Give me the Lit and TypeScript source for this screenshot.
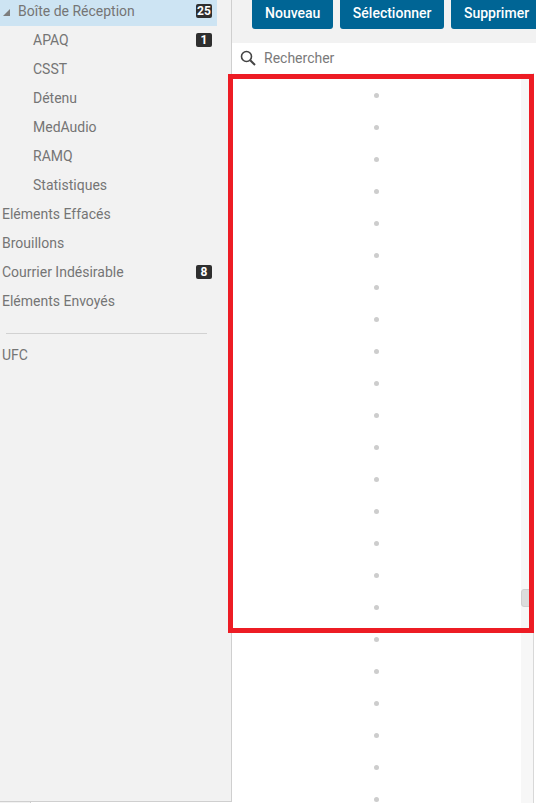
import { LitElement, html, css } from "lit";
import { customElement } from "lit/decorators.js";

const subs = [
  { t: "APAQ", b: "1" },
  { t: "CSST" },
  { t: "Détenu" },
  { t: "MedAudio" },
  { t: "RAMQ" },
  { t: "Statistiques" },
];
const tops = [
  { t: "Eléments Effacés" },
  { t: "Brouillons" },
  { t: "Courrier Indésirable", b: "8" },
  { t: "Eléments Envoyés" },
];
const dots = Array.from({ length: 23 });

@customElement("app-root")
export class AppRoot extends LitElement {
  static styles = css`
    :host {
      display: block;
      width: 536px;
      height: 803px;
      overflow: hidden;
      position: relative;
      background: #fff;
      font-family: Roboto, "Liberation Sans", sans-serif;
      font-size: 14px;
      color: #757575;
    }
    .page {
      display: flex;
      height: 803px;
    }
    .side {
      box-sizing: border-box;
      width: 232px;
      height: 802px;
      flex: none;
      background: #f2f2f2;
      border-right: 1px solid #cfcfcf;
      border-bottom: 1px solid #cfcfcf;
      padding-right: 14px;
    }
    .sel {
      display: flex;
      align-items: center;
      box-sizing: border-box;
      height: 26px;
      background: #cde4f3;
      padding: 0 5px 4px 3px;
    }
    .tri {
      width: 0;
      height: 0;
      border-left: 7px solid transparent;
      border-bottom: 7px solid #7d7d7d;
      margin-right: 8px;
      margin-top: 2px;
    }
    .row {
      display: flex;
      align-items: center;
      height: 29px;
      padding: 0 5px 0 2px;
    }
    .row.sub {
      padding-left: 33px;
    }
    .rows {
      margin-top: -1px;
    }
    .grow {
      flex: 1;
    }
    .badge {
      background: #2f2f2f;
      color: #fff;
      border-radius: 2px;
      font-size: 12px;
      font-weight: 700;
      line-height: 14px;
      height: 14px;
      width: 16px;
      text-align: center;
    }
    .rule {
      height: 1px;
      background: #d2d2d2;
      margin: 18px 10px 6px 6px;
    }
    .main {
      flex: 1;
      min-width: 0;
      display: flex;
      flex-direction: column;
    }
    .bar {
      display: flex;
      gap: 6.5px;
      height: 43px;
      flex: none;
      box-sizing: border-box;
      padding-left: 20px;
      background: #f2f2f2;
    }
    .btn {
      height: 29px;
      box-sizing: border-box;
      background: #006595;
      color: #fff;
      font-weight: 500;
      border-radius: 0 0 3px 3px;
      padding: 0 13px;
      line-height: 26px;
      white-space: nowrap;
      flex: none;
    }
    .search {
      display: flex;
      align-items: center;
      gap: 8px;
      height: 30px;
      flex: none;
      padding-left: 8px;
      color: #7a7a7a;
    }
    .list {
      flex: 1;
      display: flex;
      min-height: 0;
    }
    .items {
      flex: 1;
      display: flex;
      flex-direction: column;
      align-items: center;
      gap: 27px;
      padding-top: 20px;
      overflow: hidden;
    }
    .dot {
      width: 5px;
      height: 5px;
      flex: none;
      border-radius: 50%;
      background: #cdcdcd;
    }
    .track {
      position: relative;
      width: 12px;
      flex: none;
      background: #f7f7f7;
      border-right: 1px solid #d8d8d8;
      margin-right: 2px;
    }
    .thumb {
      position: absolute;
      left: 0;
      top: 516px;
      width: 10px;
      height: 18px;
      border-radius: 3px 0 0 3px;
      background: #dcdcdc;
      border: 1px solid #cfcfcf;
      box-sizing: border-box;
    }
    .mark {
      position: absolute;
      left: 228px;
      top: 74px;
      width: 306px;
      height: 559px;
      box-sizing: border-box;
      border: 5px solid #ed1c24;
      pointer-events: none;
    }
    .foot {
      position: absolute;
      left: 0;
      bottom: 0;
      width: 30px;
      height: 1px;
      border-right: 1px solid #cfcfcf;
      background: #f2f2f2;
    }
  `;

  render() {
    return html`
      <div class="page">
        <nav class="side">
          <div class="sel">
            <span class="tri"></span>
            <span class="grow">Boîte de Réception</span>
            <span class="badge">25</span>
          </div>
          <div class="rows">
            ${subs.map(
              (s) => html`<div class="row sub">
                <span class="grow">${s.t}</span>
                ${s.b ? html`<span class="badge">${s.b}</span>` : ""}
              </div>`
            )}
            ${tops.map(
              (s) => html`<div class="row">
                <span class="grow">${s.t}</span>
                ${s.b ? html`<span class="badge">${s.b}</span>` : ""}
              </div>`
            )}
          </div>
          <div class="rule"></div>
          <div class="row">UFC</div>
        </nav>
        <main class="main">
          <div class="bar">
            <div class="btn">Nouveau</div>
            <div class="btn">Sélectionner</div>
            <div class="btn">Supprimer</div>
          </div>
          <div class="search">
            <svg width="16" height="16" viewBox="0 0 16 16" fill="none" stroke="#444" stroke-width="1.6">
              <circle cx="6.5" cy="6.5" r="5" />
              <path d="M10.2 10.2 L15 15" stroke-width="2" />
            </svg>
            <span>Rechercher</span>
          </div>
          <div class="list">
            <div class="items">${dots.map(() => html`<span class="dot"></span>`)}</div>
            <div class="track"><div class="thumb"></div></div>
          </div>
        </main>
      </div>
      <div class="foot"></div>
      <div class="mark"></div>
    `;
  }
}
